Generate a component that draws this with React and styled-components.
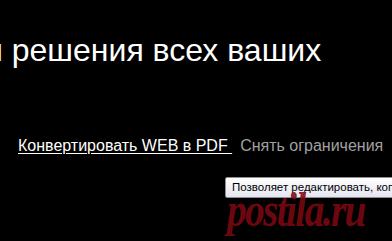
import React from "react"
import styled, { createGlobalStyle } from "styled-components"

const GlobalStyle = createGlobalStyle`
  html, body {
    margin: 0;
    padding: 0;
    background: #000;
  }
`

const Page = styled.div`
  position: relative;
  width: 392px;
  height: 241px;
  overflow: hidden;
  background: #000;
  font-family: "Liberation Sans", Arial, sans-serif;
`

const Heading = styled.h1`
  margin: 0;
  padding-top: 32px;
  margin-left: -15px;
  font-size: 32px;
  font-weight: 400;
  line-height: 36px;
  color: #fff;
  white-space: nowrap;
`

const LinkRow = styled.nav`
  display: flex;
  align-items: baseline;
  gap: 8px;
  margin-top: 68px;
  padding-left: 18px;
  white-space: nowrap;
`

const NavLink = styled.a`
  font-size: 16px;
  line-height: 20px;
  color: ${({ $active }) => ($active ? "#fff" : "#a0a0a0")};
  text-decoration: ${({ $active }) => ($active ? "underline" : "none")};
  text-underline-offset: 2px;
`

const Tooltip = styled.div`
  position: absolute;
  left: 225px;
  top: 177px;
  padding: 3px 7px 3px 6px;
  border: 1px solid #8f8f8f;
  border-radius: 2px;
  background: linear-gradient(#ffffff, #e4e5f0);
  box-shadow: 1px 1px 2px rgba(0, 0, 0, 0.5);
  font-family: "Liberation Sans", Arial, sans-serif;
  font-size: 11.5px;
  line-height: 13px;
  color: #000;
  white-space: nowrap;
`

const Watermark = styled.div`
  position: absolute;
  left: 227px;
  top: 186px;
  font-family: "Liberation Serif", "Times New Roman", serif;
  font-style: italic;
  font-weight: 700;
  font-size: 48px;
  line-height: 48px;
  letter-spacing: -2px;
  color: rgba(125, 8, 18, 0.9);
  transform: scaleX(0.82);
  transform-origin: left top;
  pointer-events: none;
`

const App = () => (
  <Page>
    <GlobalStyle />
    <Heading>и решения всех ваших</Heading>
    <LinkRow>
      <NavLink $active href="#">Конвертировать WEB в PDF&nbsp;</NavLink>
      <NavLink href="#">Снять ограничения</NavLink>
    </LinkRow>
    <Tooltip>Позволяет редактировать, копировать</Tooltip>
    <Watermark>postila.ru</Watermark>
  </Page>
)

export default App
